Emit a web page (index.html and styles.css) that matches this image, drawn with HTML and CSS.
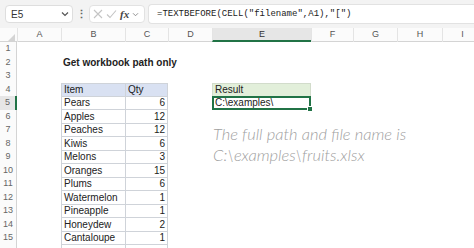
FILE: index.html
```html
<!DOCTYPE html>
<html>
  <head>
    <title>Get workbook path only</title>
    <link rel="stylesheet" href="styles.css">
  </head>
  <body>
    <div class="formula-bar">
      <div class="name-box">
        <span>E5</span>
        <svg width="8" height="6" viewBox="0 0 8 6"><path d="M1 1.5 L4 4.5 L7 1.5" fill="none" stroke="#555" stroke-width="1.2"/></svg>
      </div>
      <div class="dots">&#8942;</div>
      <div class="fx-box">
        <svg width="10" height="10" viewBox="0 0 10 10"><path d="M1 1 L9 9 M9 1 L1 9" stroke="#c4c4c4" stroke-width="1.1"/></svg>
        <svg width="11" height="10" viewBox="0 0 11 10"><path d="M1 5.5 L4 8.5 L10 1.5" fill="none" stroke="#c4c4c4" stroke-width="1.1"/></svg>
        <span class="fx">fx</span>
        <svg width="7" height="5" viewBox="0 0 8 6"><path d="M1 1.5 L4 4.5 L7 1.5" fill="none" stroke="#888" stroke-width="1.1"/></svg>
      </div>
      <div class="formula">=TEXTBEFORE(CELL("filename",A1),"[")</div>
    </div>

    <div class="sheet">
      <div class="row heads">
        <div class="corner"><span class="tri"></span></div>
        <div>A</div><div>B</div><div>C</div><div>D</div><div class="active">E</div><div>F</div><div>G</div><div>H</div><div>I</div>
      </div>
      <div class="row"><div class="rh">1</div></div>
      <div class="row"><div class="rh">2</div><div></div><div class="title">Get workbook path only</div></div>
      <div class="row"><div class="rh">3</div></div>
      <div class="row"><div class="rh">4</div><div></div><div class="t first th-cell">Item</div><div class="t last th-cell">Qty</div><div></div><div class="res-head">Result</div></div>
      <div class="row"><div class="rh sel">5</div><div></div><div class="t">Pears</div><div class="t last num">6</div><div></div><div class="res"><span>C:\examples\</span><i class="handle"></i></div></div>
      <div class="row"><div class="rh">6</div><div></div><div class="t">Apples</div><div class="t last num">12</div></div>
      <div class="row"><div class="rh">7</div><div></div><div class="t">Peaches</div><div class="t last num">12</div></div>
      <div class="row"><div class="rh">8</div><div></div><div class="t">Kiwis</div><div class="t last num">6</div></div>
      <div class="row"><div class="rh">9</div><div></div><div class="t">Melons</div><div class="t last num">3</div></div>
      <div class="row"><div class="rh">10</div><div></div><div class="t">Oranges</div><div class="t last num">15</div></div>
      <div class="row"><div class="rh">11</div><div></div><div class="t">Plums</div><div class="t last num">6</div></div>
      <div class="row"><div class="rh">12</div><div></div><div class="t">Watermelon</div><div class="t last num">1</div></div>
      <div class="row"><div class="rh">13</div><div></div><div class="t">Pineapple</div><div class="t last num">1</div></div>
      <div class="row"><div class="rh">14</div><div></div><div class="t">Honeydew</div><div class="t last num">2</div></div>
      <div class="row"><div class="rh">15</div><div></div><div class="t">Cantaloupe</div><div class="t last num">1</div></div>
      <div class="row"><div class="rh"></div><div></div><div class="t"></div><div class="t last"></div></div>

      <div class="note">The full path and file name is<br>C:\examples\fruits.xlsx</div>
    </div>
  </body>
</html>
```

FILE: styles.css
```css
body {
  margin: 0;
  width: 474px;
  height: 248px;
  overflow: hidden;
  background: #fff;
  font-family: "Liberation Sans", Arial, sans-serif;
}

.formula-bar {
  display: flex;
  align-items: center;
  height: 28px;
  padding: 0 0 0 5px;
  background: #f3f3f3;
  box-sizing: border-box;
}
.name-box {
  width: 68px;
  height: 18px;
  box-sizing: border-box;
  background: #fff;
  border: 1px solid #dedede;
  border-radius: 4px;
  display: flex;
  align-items: center;
  justify-content: space-between;
  padding: 0 3px 0 5px;
  font-size: 10px;
  color: #333;
}
.dots {
  width: 16px;
  text-align: center;
  font-size: 11px;
  color: #666;
  font-weight: bold;
}
.fx-box {
  width: 56px;
  height: 18px;
  box-sizing: border-box;
  background: #fff;
  border: 1px solid #e2e2e2;
  border-radius: 4px;
  display: flex;
  align-items: center;
  gap: 3px;
  padding: 0 3px;
}
.fx {
  font-family: "Liberation Serif", serif;
  font-style: italic;
  font-weight: bold;
  font-size: 11px;
  color: #444;
}
.formula {
  flex: 1;
  margin-left: 3px;
  height: 18px;
  line-height: 18px;
  background: #fff;
  border: 1px solid #e2e2e2;
  border-right: none;
  border-radius: 4px 0 0 4px;
  padding-left: 8px;
  font-family: "Liberation Mono", monospace;
  font-size: 9px;
  color: #222;
}

.sheet {
  position: relative;
  font-size: 10px;
  color: #222;
}
.row {
  display: grid;
  grid-template-columns: 17px 44px 64px 43px 44px 99px 42px 44px 45px 40px;
  height: 13.5px;
}
.row > div {
  box-sizing: border-box;
  padding: 0 2px;
  line-height: 13px;
  white-space: nowrap;
}
.row.heads {
  height: 13px;
  border-bottom: 1px solid #d4d4d4;
  background: #fbfbfb;
}
.heads > div {
  text-align: center;
  font-size: 9px;
  color: #555;
  line-height: 12px;
  border-left: 1px solid #e4e4e4;
}
.heads > div.corner {
  position: relative;
  border-left: none;
}
.tri {
  position: absolute;
  right: 2px;
  bottom: 1px;
  width: 0;
  height: 0;
  border-left: 7px solid transparent;
  border-bottom: 7px solid #d4d4d4;
}
.heads > div.active {
  background: #e6e6e6;
  border-bottom: 2px solid #217346;
  color: #333;
}
.row > div.rh {
  font-size: 9px;
  color: #666;
  text-align: center;
  background: #fbfbfb;
  border-right: 1px solid #d4d4d4;
  padding: 0;
  line-height: 13.5px;
}
.row > div.rh.sel {
  border-right: 2px solid #217346;
  background: #e6e6e6;
}
.title {
  font-weight: bold;
  font-size: 10px;
  line-height: 14px !important;
}
.t {
  border-left: 1px solid #cfd3d9;
  border-bottom: 1px solid #cfd3d9;
}
.t.last {
  border-right: 1px solid #cfd3d9;
}
.t.th-cell {
  background: #d9e1f2;
  border-top: 1px solid #cfd3d9;
  line-height: 12px !important;
}
.num {
  text-align: right;
}
.res-head {
  background: #e2efda;
  border: 1px solid #d2dccb;
  line-height: 12px !important;
}
.row > div.res {
  position: relative;
  border: 2px solid #217346;
  padding-left: 1px;
  line-height: 10px;
}
.handle {
  position: absolute;
  right: -4px;
  bottom: -4px;
  width: 4px;
  height: 4px;
  background: #217346;
  border: 1px solid #fff;
}

.note {
  position: absolute;
  left: 213px;
  top: 96px;
  font-family: "Lato", sans-serif;
  font-style: italic;
  font-weight: 300;
  font-size: 16.5px;
  line-height: 21px;
  color: #9f9f9f;
}
```
